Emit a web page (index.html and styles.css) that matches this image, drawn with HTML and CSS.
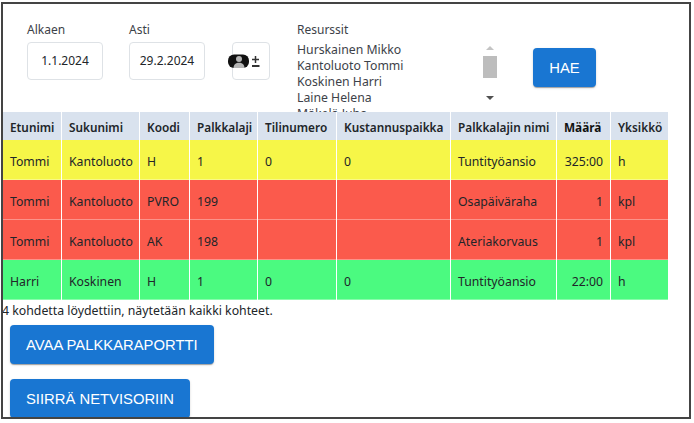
FILE: index.html
```html
<!DOCTYPE html>
<html lang="fi">
<head>
<meta charset="utf-8">
<title>Palkkaraportti</title>
<link rel="stylesheet" href="styles.css">
</head>
<body>
<main class="frame">
  <section class="filters">
    <div class="field field-start">
      <label class="label">Alkaen</label>
      <div class="date">1.1.2024</div>
    </div>
    <div class="field field-end">
      <label class="label">Asti</label>
      <div class="date">29.2.2024</div>
    </div>
    <button class="icon-btn" aria-label="Valitse resurssit">
      <svg class="icon" width="34" height="16" viewBox="0 0 34 16">
        <rect x="0" y="0.500" width="21" height="13.500" rx="6" fill="#111"/>
        <circle cx="11" cy="5" r="3" fill="#b5b5b5"/>
        <path d="M5.500 14c0-3.500 2.500-5.300 5.500-5.300s5.500 1.800 5.500 5.300z" fill="#b5b5b5"/>
        <path d="M27.500 2v7M24 5.500h7" stroke="#333" stroke-width="1.500" fill="none"/>
        <path d="M24 12h7.500" stroke="#333" stroke-width="2" fill="none"/>
      </svg>
    </button>
    <div class="resources">
      <label class="label">Resurssit</label>
      <div class="listbox">
        <div class="options">
          <div>Hurskainen Mikko</div>
          <div>Kantoluoto Tommi</div>
          <div>Koskinen Harri</div>
          <div>Laine Helena</div>
          <div>Mäkelä Juha</div>
        </div>
        <div class="scrollbar">
          <span class="arrow arrow-up"></span>
          <span class="thumb"></span>
          <span class="arrow arrow-down"></span>
        </div>
      </div>
    </div>
    <button class="btn btn-search">HAE</button>
  </section>
  <table class="report">
    <colgroup>
      <col class="c1"><col class="c2"><col class="c3"><col class="c4"><col class="c5"><col class="c6"><col class="c7"><col class="c8"><col class="c9">
    </colgroup>
    <thead>
      <tr><th>Etunimi</th><th>Sukunimi</th><th>Koodi</th><th>Palkkalaji</th><th>Tilinumero</th><th>Kustannuspaikka</th><th>Palkkalajin nimi</th><th class="strong">Määrä</th><th>Yksikkö</th></tr>
    </thead>
    <tbody>
      <tr class="yellow"><td>Tommi</td><td>Kantoluoto</td><td>H</td><td>1</td><td>0</td><td>0</td><td>Tuntityöansio</td><td class="num">325:00</td><td>h</td></tr>
      <tr class="red"><td>Tommi</td><td>Kantoluoto</td><td>PVRO</td><td>199</td><td></td><td></td><td>Osapäiväraha</td><td class="num">1</td><td>kpl</td></tr>
      <tr class="red"><td>Tommi</td><td>Kantoluoto</td><td>AK</td><td>198</td><td></td><td></td><td>Ateriakorvaus</td><td class="num">1</td><td>kpl</td></tr>
      <tr class="green"><td>Harri</td><td>Koskinen</td><td>H</td><td>1</td><td>0</td><td>0</td><td>Tuntityöansio</td><td class="num">22:00</td><td>h</td></tr>
    </tbody>
  </table>
  <p class="summary">4 kohdetta löydettiin, näytetään kaikki kohteet.</p>
  <div class="actions">
    <button class="btn btn-wide">AVAA PALKKARAPORTTI</button>
    <button class="btn btn-wide">SIIRRÄ NETVISORIIN</button>
  </div>
</main>
</body>
</html>
```
FILE: styles.css
```css
* { box-sizing: border-box; }
html, body { margin: 0; padding: 0; background: #fff; }
body { padding: 2px 2px 0 1px; font-family: "Noto Sans", "Open Sans", sans-serif; color: #212529; width: 694px; height: 423px; overflow: hidden; }
.frame { width: 690px; height: 417px; border: 2px solid #444; overflow: hidden; }
.filters { display: flex; height: 108px; padding: 17px 0 0 24px; }
.field { display: flex; flex-direction: column; width: 78px; }
.field-start { margin-right: 24px; }
.field-end { margin-right: 25px; }
.label { display: block; font-size: 12px; line-height: 17px; color: #3d4249; height: 21px; }
.date { width: 76px; height: 38px; border: 1px solid #dee2e6; border-radius: 4px; font-size: 12px; line-height: 36px; text-align: center; color: #212529; }
.icon-btn { width: 38px; height: 38px; margin-top: 21px; padding: 0; border: 1px solid #dee2e6; border-radius: 4px; background: #fff; position: relative; }
.icon { position: absolute; left: -5px; top: 11px; width: 34px; height: 16px; }
.resources { margin-left: 27px; width: 236px; }
.listbox { display: flex; height: 70px; overflow: hidden; }
.options { width: 186px; font-size: 12.250px; line-height: 16px; color: #3d4249; }
.scrollbar { width: 14px; height: 64px; display: flex; flex-direction: column; align-items: center; padding-top: 4px; }
.arrow { width: 0; height: 0; border-left: 4px solid transparent; border-right: 4px solid transparent; }
.arrow-up { border-bottom: 4px solid #c4c4c4; }
.arrow-down { border-top: 4px solid #505050; margin-top: 18px; }
.thumb { width: 14px; height: 22px; margin-top: 6px; background: #bdbdbd; }
.btn { border: 0; border-radius: 4px; background: #1976d2; color: #fff; font-family: "Liberation Sans", Arial, sans-serif; font-size: 14.800px; font-weight: 400; box-shadow: 0 2px 1px -1px rgba(0,0,0,.2), 0 1px 1px rgba(0,0,0,.14), 0 1px 3px rgba(0,0,0,.12); }
.btn-search { width: 63px; height: 39px; margin-top: 27px; }
.report { border-collapse: separate; border-spacing: 1px 0; table-layout: fixed; width: 667px; margin-left: -1px; font-size: 12.250px; }
.c1 { width: 58px; } .c2 { width: 77px; } .c3 { width: 49px; } .c4 { width: 67px; } .c5 { width: 78px; } .c6 { width: 113px; } .c7 { width: 105px; } .c8 { width: 53px; } .c9 { width: 57px; }
th { height: 28px; padding: 1px 0 0 7px; background: #d9e2ee; font-weight: 600; font-size: 11.800px; color: #212529; text-align: left; white-space: nowrap; }
th.strong { font-weight: 700; color: #111; }
td { height: 40px; padding: 3px 0 0 7px; border-bottom: 1px solid rgba(255,255,255,.35); color: #212529; white-space: nowrap; }
td.num { text-align: right; padding: 3px 7px 0 0; }
.yellow td { background: #f6f648; }
.red td { background: #fb5a4c; }
.green td { background: #4bfa80; }
.summary { margin: 2px 0 0 -1px; font-size: 12.300px; line-height: 17px; color: #212529; }
.actions { display: flex; flex-direction: column; align-items: flex-start; gap: 15px; padding: 6px 0 0 7px; }
.btn-wide { height: 39px; padding: 0 16px; }
```
